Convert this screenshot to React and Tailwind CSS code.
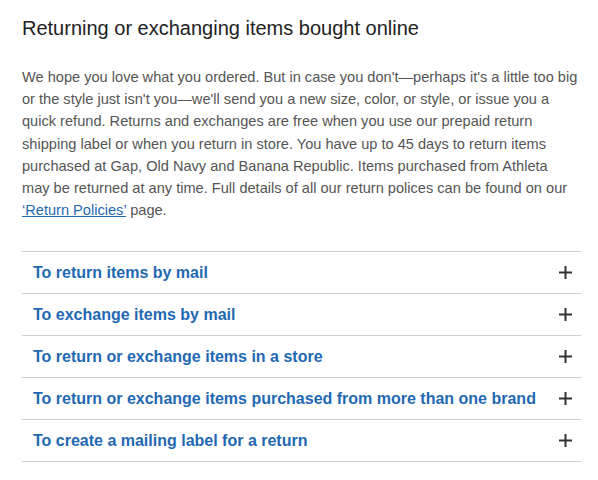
import React from 'react';

const items = [
  'To return items by mail',
  'To exchange items by mail',
  'To return or exchange items in a store',
  'To return or exchange items purchased from more than one brand',
  'To create a mailing label for a return',
];

const App = () => {
  return (
    <div className="w-[598px] h-[480px] bg-white px-[22px] pt-[14px] font-['Liberation_Sans',Arial,sans-serif]">
      <h1 className="text-[20px] leading-[28px] text-[#222]">Returning or exchanging items bought online</h1>

      <p className="mt-[24px] w-[560px] text-[14.6px] leading-[22.2px] text-[#555]">
        We hope you love what you ordered. But in case you don't—perhaps it's a little too big or the style just isn't you—we'll send you a new size, color, or style, or issue you a quick refund. Returns and exchanges are free when you use our prepaid return shipping label or when you return in store. You have up to 45 days to return items purchased at Gap, Old Navy and Banana Republic. Items purchased from Athleta<br />
        may be returned at any time. Full details of all our return polices can be found on our{' '}
        <a href="#" className="text-[#1f69b3] underline">‘Return Policies’</a> page.
      </p>

      <div className="mt-[30px] w-[559px] border-t border-[#cfcfcf]">
        {items.map((t) => (
          <div key={t} className="h-[42px] flex items-center justify-between border-b border-[#cfcfcf] pl-[11px] pr-[9px]">
            <span className="text-[16px] font-bold text-[#1f69b3]">{t}</span>
            <svg width="13" height="13" viewBox="0 0 13 13">
              <path d="M6.5 0v13M0 6.5h13" stroke="#333" strokeWidth="2" />
            </svg>
          </div>
        ))}
      </div>
    </div>
  );
};

export default App;
